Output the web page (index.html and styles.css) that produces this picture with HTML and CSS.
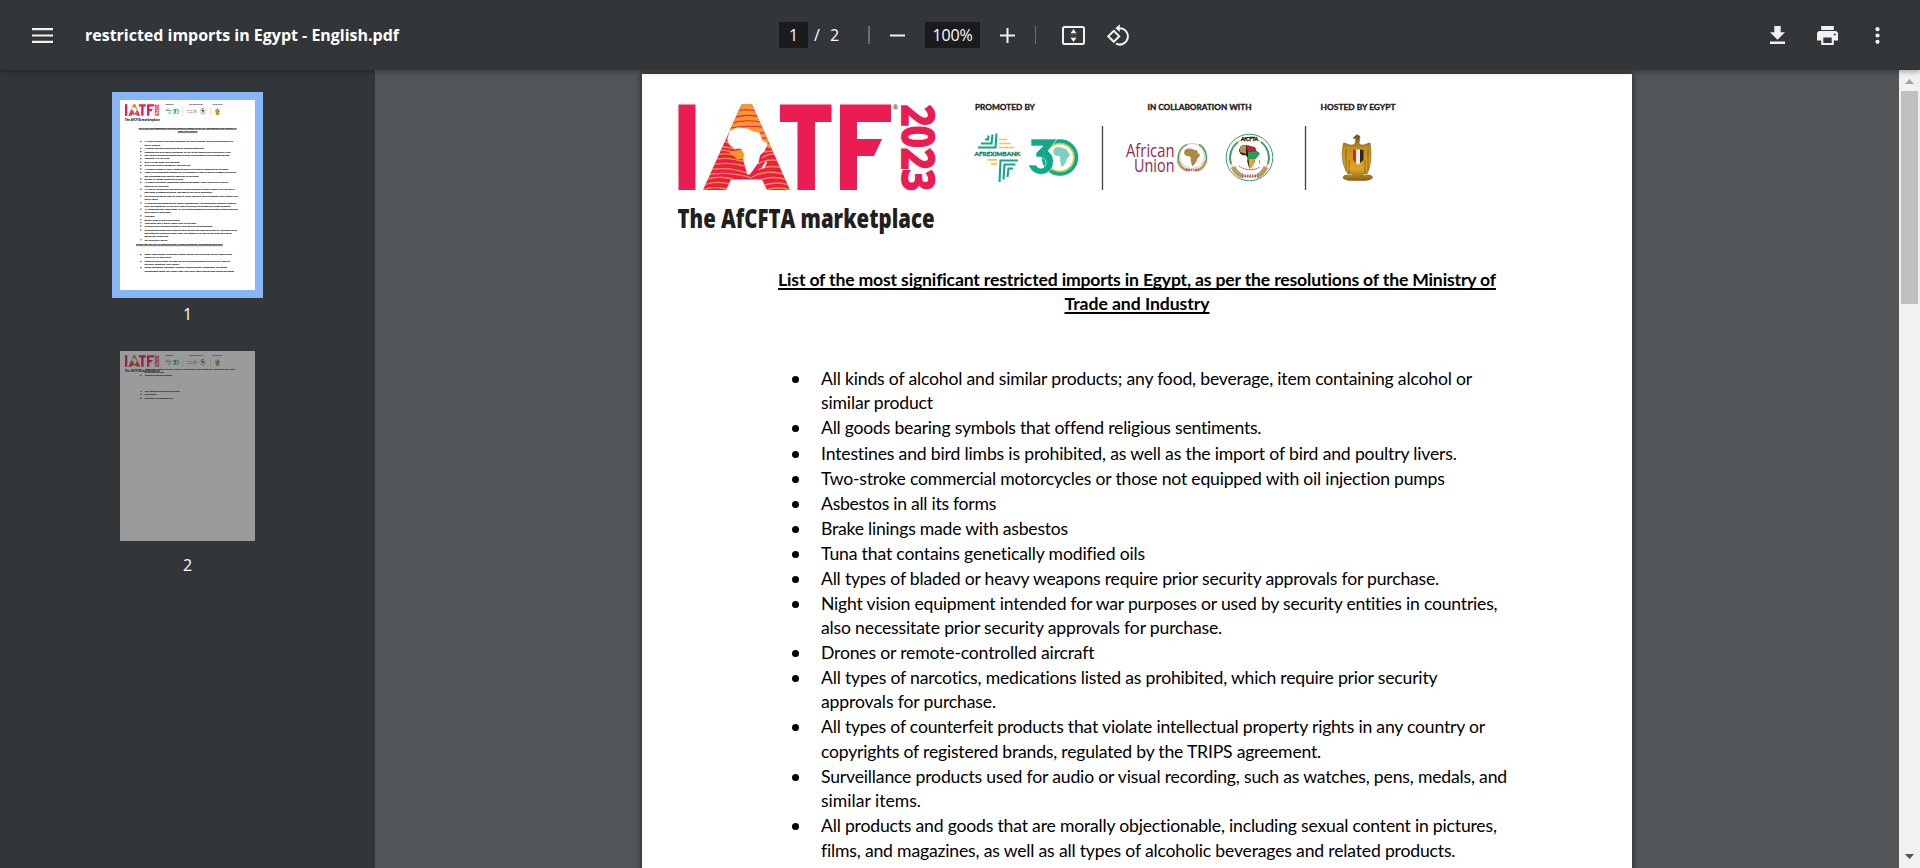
FILE: index.html
```html
<!DOCTYPE html>
<html lang="en">
<head>
<meta charset="utf-8">
<title>restricted imports in Egypt - English.pdf</title>
<link rel="stylesheet" href="styles.css">
</head>
<body>
<svg class="defs" width="0" height="0">
  <defs>
    <path id="africa" d="M6 8L24 0L48 2L62 9L78 12L86 32L98 38L92 54L79 68L76 84L66 98L56 112L50 114L44 94L40 78L42 64L34 50L18 50L6 42L0 28Z"/>
    <clipPath id="aShape"><path d="M741.5 104.5H752L790 190H767L762 179.500H731L726 190H703Z"/></clipPath>
    <linearGradient id="gold" x1="0" x2="0" y1="0" y2="1"><stop offset="0" stop-color="#6b4d18"/><stop offset=".3" stop-color="#c58e1d"/><stop offset=".75" stop-color="#dba525"/><stop offset="1" stop-color="#8a6114"/></linearGradient>
    <symbol id="banner" viewBox="642 74 990 190">
      <g fill="#ea1c52">
        <path d="M678.500 104.500H695.500V190H678.500Z"/>
        <path d="M741.500 104.500H752L790 190H767L762 179.500H731L726 190H703Z"/>
        <path d="M780 104.500H831.500V122H815V190H797.500V122H780Z"/>
        <path d="M840 104.500H891V122H857V139H882L874 156H857V190H840Z"/>
      </g>
      <g clip-path="url(#aShape)">
        <path d="M735 104H760L782 152L760 145L750 134L728 134Z" fill="#f8982a"/>
        <g fill="none" stroke="#ea1c52" stroke-width="1.100">
          <path d="M730 113Q744 107 760 112M730 119Q744 113 762 117M728 124Q746 118 766 123M725 129Q746 124 770 128M754 134L775 131M758 139L778 136M762 144L780 142"/>
        </g>
        <g fill="none" stroke="#f8982a" stroke-width="1.300">
          <path d="M716 140L736 144M714 145L736 149M712 150Q724 149 742 154M710 156Q726 151 746 158M708 161Q726 155 748 163M706 166Q726 160 752 168M704 171Q726 165 750 174M702 176Q726 170 752 178M702 181Q718 174 736 180M702 186Q714 180 730 184M702 190Q712 186 726 189M762 152L784 150M762 158Q772 150 786 158M758 164Q770 156 788 164M758 170Q770 163 790 170M752 177Q768 168 790 176M758 181Q772 174 790 181M762 186Q776 180 792 186M765 190Q778 186 792 190"/>
        </g>
        <path d="M729 152L744 149V159H737Z" fill="#f8982a"/>
      </g>
      <use href="#africa" transform="translate(727.500 128) scale(.405 .407)" fill="#fff" stroke="#fff" stroke-width="2" stroke-linejoin="round"/>
      <path d="M766 161L762 167L763.500 169L767 163Z" fill="#fff"/>
      <text class="reg" x="893" y="110">®</text>
      <text class="year" transform="translate(902 104.500) rotate(90)" textLength="86.500" lengthAdjust="spacingAndGlyphs">2023</text>
      <text class="tag" x="677.500" y="228" textLength="257" lengthAdjust="spacingAndGlyphs">The AfCFTA marketplace</text>

      <g class="cap">
        <text x="975" y="110" textLength="60" lengthAdjust="spacingAndGlyphs">PROMOTED BY</text>
        <text x="1147.500" y="110" textLength="104" lengthAdjust="spacingAndGlyphs">IN COLLABORATION WITH</text>
        <text x="1320.500" y="110" textLength="75" lengthAdjust="spacingAndGlyphs">HOSTED BY EGYPT</text>
      </g>
      <path d="M1102.500 126V190M1305.500 126V190" stroke="#444" stroke-width="1.300"/>

      <g fill="none" stroke="#12a88b" stroke-width="2.100">
        <path d="M978 147.500H995.500L996.500 133.500M981 143.500H991.500L992.500 134.500M985 139.500H988L988.500 135.500"/>
        <path d="M1018 160.500H1000.500L999.500 182M1015.500 164.500H1004.500L1003.500 179.500M1013 168.500H1008.500L1007.500 177"/>
      </g>
      <path d="M999 139.500H1007M999 143.500H1010.500M999 147.500H1014M987.500 159.800H997M991 163.800H997" stroke="#f4c63d" stroke-width="1.700"/>
      <text class="afrexim" x="974.500" y="155.900" textLength="46" lengthAdjust="spacingAndGlyphs">AFREXIMBANK</text>

      <circle cx="1060" cy="157.500" r="16" fill="#fff" stroke="#12a88b" stroke-width="4.500"/>
      <circle cx="1060" cy="157.500" r="13.800" fill="none" stroke="#e9cf3f" stroke-width="2" stroke-dasharray="2 .6"/>
      <use href="#africa" transform="translate(1053 147) scale(.175)" fill="#7fd0bf"/>
      <path d="M1031 139H1057L1048 151Q1055 156 1053 165C1050 177 1033 178 1028.500 165H1036C1039 171 1047 168 1046 162C1045 157 1040 157 1036 157V153L1043 146H1031Z" fill="#12a88b" stroke="#fff" stroke-width=".6"/>

      <g class="au">
        <text x="1126" y="156.500" textLength="48.500" lengthAdjust="spacingAndGlyphs">African</text>
        <text x="1134" y="172" textLength="40.500" lengthAdjust="spacingAndGlyphs">Union</text>
      </g>
      <g fill="none">
        <path d="M1181 167A15 15 0 0 1 1187 144.500M1203 167A15 15 0 0 0 1199 144.500" stroke="#3d9a66" stroke-width="1.500"/>
        <circle cx="1192" cy="156" r="12.500" stroke="#c5b98f" stroke-width=".8"/>
        <path d="M1178 161Q1182 171 1190 170M1206 161Q1202 171 1195 170" stroke="#b99b63" stroke-width="3"/>
        <path d="M1186 170H1199" stroke="#b25a6b" stroke-width="2" stroke-dasharray="1 .7"/>
      </g>
      <use href="#africa" transform="translate(1184 148.500) scale(.165 .155)" fill="#ac8842"/>

      <g fill="none">
        <circle cx="1249.500" cy="157.500" r="23.300" stroke="#3d9a66" stroke-width="1"/>
        <circle cx="1249.500" cy="157.500" r="19.500" stroke="#b9a88a" stroke-width=".8"/>
        <path d="M1231 164A20 20 0 0 1 1238 142M1268 164A20 20 0 0 0 1261 142" stroke="#3d9a66" stroke-width="1.800"/>
        <path d="M1233 167Q1237 175 1243 176M1266 167Q1262 175 1257 176" stroke="#b99b63" stroke-width="5"/>
        <path d="M1242 176H1258" stroke="#b25a6b" stroke-width="3" stroke-dasharray="1.500 1"/>
        <path d="M1239 166Q1249 173 1260 167" stroke="#a13b65" stroke-width="1" stroke-dasharray="1.500 .5"/>
      </g>
      <text class="afcfta" x="1241" y="141" textLength="17" lengthAdjust="spacingAndGlyphs">AfCFTA</text>
      <use href="#africa" transform="translate(1239 145) scale(.205)" fill="#222"/>
      <path d="M1240 146L1246 145V154L1240 152Z" fill="#b59259"/>
      <path d="M1246 145.500L1255 147L1256 151L1248 152Z" fill="#b5283c"/>
      <path d="M1248 152L1257 151L1260 154L1255 159H1248Z" fill="#2b9a54"/>
      <path d="M1248.500 159H1255L1254 164L1251 168.500H1249.500Z" fill="#f2a02d"/>
      <path d="M1259 161L1260.500 159.500L1259 165Z" fill="#2b9a54"/>

      <path d="M1353 138L1357 134.500L1360 136.500L1359 144C1363 147 1367 143 1370 143C1372 155 1371 165 1367 174H1361L1364 175.500Q1373 174 1372.500 178Q1370 181 1358 180.500Q1345 181 1343 178Q1343 174 1351 175.500L1354 174H1348C1342 165 1341 155 1343.500 143C1347 143 1350 147 1355 144L1356 139Z" fill="url(#gold)" stroke="#81601f" stroke-width=".6"/>
      <path d="M1346 149V171M1368 149V171M1349 160V173M1365 160V173" stroke="#80591b" stroke-width=".8"/>
      <path d="M1353 150V160L1356 163V149.500Z" fill="#c82d34"/>
      <path d="M1356 149.500H1360V163L1358 165L1356 163Z" fill="#f2eee2"/>
      <path d="M1360 149.500L1363.500 150V160L1360 163Z" fill="#2c251d"/>
    </symbol>
  </defs>
</svg>

<header class="toolbar">
  <svg class="menu" viewBox="0 0 21 15"><path d="M0 1.200H21M0 7.500H21M0 13.800H21"/></svg>
  <div class="title fit" data-width="314">restricted imports in Egypt - English.pdf</div>
  <div class="controls">
    <span class="field page-no">1</span>
    <span class="slash">/</span>
    <span class="total">2</span>
    <i class="rule"></i>
    <svg class="sign minus" viewBox="0 0 15 15"><path d="M0 7.500H15"/></svg>
    <span class="field zoom">100%</span>
    <svg class="sign plus" viewBox="0 0 15 15"><path d="M0 7.500H15M7.500 0V15"/></svg>
    <i class="rule second"></i>
    <svg class="fit-icon" viewBox="0 0 23 19"><rect x="1" y="1" width="21" height="17" rx="1.500" fill="none" stroke="#f1f1f1" stroke-width="2"/><path d="M11.500 3L14.300 7H8.700ZM11.500 16L14.300 12H8.700Z" fill="#f1f1f1"/><path d="M8.500 7.800H14.500M8.500 11.200H14.500" stroke="#f1f1f1" stroke-width=".8" opacity=".5"/></svg>
    <svg class="rotate" viewBox="0 0 22 22"><path d="M1.300 12.300L6.800 6.800L12.300 12.300L6.800 17.800Z" fill="none" stroke="#f1f1f1" stroke-width="2"/><path d="M12 4.200A8.200 8.200 0 1 1 9 19.700" fill="none" stroke="#f1f1f1" stroke-width="2"/><path d="M12.800 .3V8.100L8.300 4.200Z" fill="#f1f1f1"/></svg>
  </div>
  <div class="actions">
    <svg width="15" height="18" viewBox="0 0 15 18"><path d="M4.300 0H10.700V6.300H15L7.500 13.800L0 6.300H4.300ZM0 15.600H15V18H0Z"/></svg>
    <svg width="21" height="19" viewBox="0 0 21 19"><path fill-rule="evenodd" d="M4.200 0H16.800V4H4.200ZM3 5H18Q21 5 21 8V14.600H16.800V19H4.200V14.600H0V8Q0 5 3 5ZM6.300 11.500V17H14.700V11.500ZM17.800 7.400A1 1 0 1 0 17.800 9.500A1 1 0 1 0 17.800 7.400Z"/></svg>
    <svg width="5" height="17" viewBox="0 0 5 17"><circle cx="2.500" cy="2.200" r="2.100"/><circle cx="2.500" cy="8.500" r="2.100"/><circle cx="2.500" cy="14.800" r="2.100"/></svg>
  </div>
</header>

<main class="viewer">
  <aside class="sidebar">
    <div class="thumb selected">
      <svg class="sheet" viewBox="642 74 990 1393">
        <use href="#banner" x="642" y="74" width="990" height="190"/>
        <g class="mini-head">
          <text x="778" y="286" textLength="718">List of the most significant restricted imports in Egypt, as per the resolutions of the Ministry of</text>
          <text x="1065" y="310" textLength="145">Trade and Industry</text>
          <text x="760" y="1139" textLength="636">Goods that can only be imported under certain conditions, including payment only</text>
          <path d="M778 289H1496M1065 313H1210M760 1142H1396" stroke="#000" stroke-width="4"/>
        </g>
        <g class="mini">
          <text x="821" y="385" textLength="651">All kinds of alcohol and similar products; any food, beverage, item containing alcohol or</text>
          <text x="821" y="409">similar product</text>
          <text x="821" y="434" textLength="440">All goods bearing symbols that offend religious sentiments.</text>
          <text x="821" y="459" textLength="636">Intestines and bird limbs is prohibited, as well as the import of bird and poultry livers.</text>
          <text x="821" y="485" textLength="624">Two-stroke commercial motorcycles or those not equipped with oil injection pumps</text>
          <text x="821" y="510">Asbestos in all its forms</text>
          <text x="821" y="535">Brake linings made with asbestos</text>
          <text x="821" y="560">Tuna that contains genetically modified oils</text>
          <text x="821" y="585" textLength="618">All types of bladed or heavy weapons require prior security approvals for purchase.</text>
          <text x="821" y="610" textLength="676">Night vision equipment intended for war purposes or used by security entities in countries,</text>
          <text x="821" y="635" textLength="401">also necessitate prior security approvals for purchase.</text>
          <text x="821" y="659">Drones or remote-controlled aircraft</text>
          <text x="821" y="685" textLength="617">All types of narcotics, medications listed as prohibited, which require prior security</text>
          <text x="821" y="709">approvals for purchase.</text>
          <text x="821" y="734" textLength="663">All types of counterfeit products that violate intellectual property rights in any country or</text>
          <text x="821" y="759" textLength="499">copyrights of registered brands, regulated by the TRIPS agreement.</text>
          <text x="821" y="784" textLength="686">Surveillance products used for audio or visual recording, such as watches, pens, medals, and</text>
          <text x="821" y="807">similar items.</text>
          <text x="821" y="834" textLength="675">All products and goods that are morally objectionable, including sexual content in pictures,</text>
          <text x="821" y="857" textLength="634">films, and magazines, as well as all types of alcoholic beverages and related products.</text>
          <text x="821" y="880" textLength="686">All hunting devices, ammunition, or surveillance equipment are prohibited without approval</text>
          <text x="821" y="906">from security authorities</text>
          <text x="821" y="929">Narcotics</text>
          <text x="821" y="958">Energy drugs or their equivalents</text>
          <text x="821" y="980">Used parts with a power higher than is allowable</text>
          <text x="821" y="1003" textLength="498">Children's toys resembling pistols or rifles that are solid projectiles</text>
          <text x="821" y="1032" textLength="680">Incandescent lamps with filament light sources and large sounding kit, operating on an</text>
          <text x="821" y="1054" textLength="640">alternating current power supply from 100 watts to 240 volts, falling under tariff codes</text>
          <text x="821" y="1076">85392100, 85392900</text>
          <text x="821" y="1105">Car cooling air fabrics</text>
          <text x="821" y="1213" textLength="645">Ready-made clothes, furnishings, textiles, carpets, floor coverings, and on-apparel parts,</text>
          <text x="821" y="1236">except for our baby parts</text>
          <text x="821" y="1265" textLength="630">Shoes and similar items like bags, as well as consumer goods such as jewelry, scarves,</text>
          <text x="821" y="1287">ceramics, glassware, and utensils</text>
          <text x="821" y="1309" textLength="610">Sports equipment, cosmetics, weapons, pets and strips, newspapers, art objects,</text>
          <text x="821" y="1338" textLength="655">archaeological pieces, fish, military caps, yard works, fabric-type bundles, pencils and straps</text>
        </g>
        <path class="dots" d="M795 379h0M795 428h0M795 453h0M795 479h0M795 504h0M795 529h0M795 554h0M795 579h0M795 604h0M795 653h0M795 679h0M795 728h0M795 778h0M795 828h0M795 874h0M795 923h0M795 952h0M795 974h0M795 997h0M795 1026h0M795 1099h0M795 1207h0M795 1259h0M795 1303h0"/>
      </svg>
    </div>
    <div class="num">1</div>
    <div class="thumb second-thumb">
      <svg class="sheet" viewBox="642 74 990 1393">
        <use href="#banner" x="642" y="74" width="990" height="190"/>
        <g class="mini">
          <text x="821" y="214" textLength="666">Appliances, electric and non-electric, components, metal supports, unfinishing, and metal</text>
          <text x="821" y="232">furniture products</text>
          <text x="821" y="257" textLength="203">Medical drugs and supplies</text>
          <text x="821" y="375" textLength="257">Non-alcoholic flavoured beverages</text>
          <text x="821" y="397">Chocolates</text>
          <text x="821" y="426" textLength="210">Cosmetics and essential oils</text>
        </g>
        <path class="dots" d="M795 208h0M795 251h0M795 369h0M795 391h0M795 420h0"/>
      </svg>
    </div>
    <div class="num">2</div>
  </aside>

  <section class="stage">
    <article class="page">
      <svg class="banner"><use href="#banner"/></svg>
      <h1>
        <span class="fit" data-width="718">List of the most significant restricted imports in Egypt, as per the resolutions of the Ministry of</span><br>
        <span class="fit" data-width="145">Trade and Industry</span>
      </h1>
      <ul>
        <li><span class="fit" data-width="651">All kinds of alcohol and similar products; any food, beverage, item containing alcohol or</span><br><span class="fit" data-width="112">similar product</span></li>
        <li><span class="fit" data-width="440">All goods bearing symbols that offend religious sentiments.</span></li>
        <li><span class="fit" data-width="636">Intestines and bird limbs is prohibited, as well as the import of bird and poultry livers.</span></li>
        <li><span class="fit" data-width="624">Two-stroke commercial motorcycles or those not equipped with oil injection pumps</span></li>
        <li><span class="fit" data-width="175">Asbestos in all its forms</span></li>
        <li><span class="fit" data-width="247">Brake linings made with asbestos</span></li>
        <li><span class="fit" data-width="324">Tuna that contains genetically modified oils</span></li>
        <li><span class="fit" data-width="618">All types of bladed or heavy weapons require prior security approvals for purchase.</span></li>
        <li><span class="fit" data-width="677">Night vision equipment intended for war purposes or used by security entities in countries,</span><br><span class="fit" data-width="401">also necessitate prior security approvals for purchase.</span></li>
        <li><span class="fit" data-width="273">Drones or remote-controlled aircraft</span></li>
        <li><span class="fit" data-width="617">All types of narcotics, medications listed as prohibited, which require prior security</span><br><span class="fit" data-width="175">approvals for purchase.</span></li>
        <li><span class="fit" data-width="664">All types of counterfeit products that violate intellectual property rights in any country or</span><br><span class="fit" data-width="500">copyrights of registered brands, regulated by the TRIPS agreement.</span></li>
        <li><span class="fit" data-width="686">Surveillance products used for audio or visual recording, such as watches, pens, medals, and</span><br><span class="fit" data-width="100">similar items.</span></li>
        <li><span class="fit" data-width="676">All products and goods that are morally objectionable, including sexual content in pictures,</span><br><span class="fit" data-width="634">films, and magazines, as well as all types of alcoholic beverages and related products.</span></li>
      </ul>
    </article>
  </section>

  <div class="scrollbar">
    <svg class="arrow" viewBox="0 0 9 5"><path d="M4.500 0L9 5H0Z" fill="#a3a3a3"/></svg>
    <div class="handle"></div>
    <svg class="arrow down" viewBox="0 0 9 5"><path d="M4.500 5L9 0H0Z" fill="#505050"/></svg>
  </div>
</main>
<script src="fit.js"></script>
</body>
</html>
```
FILE: styles.css
```css
* { box-sizing: border-box; }
html, body { height: 100%; }
body {
  margin: 0;
  overflow: hidden;
  display: flex;
  flex-direction: column;
  background: #525659;
  font-family: "Open Sans", "Noto Sans", sans-serif;
}
.defs { position: absolute; }
svg { display: block; flex: none; }

.toolbar {
  position: relative;
  z-index: 2;
  flex: none;
  height: 70px;
  display: flex;
  align-items: center;
  padding: 0 40px 0 32px;
  background: #323639;
  color: #fff;
  box-shadow: 0 2px 5px rgba(0, 0, 0, .3);
}
.menu { width: 21px; height: 15px; stroke: #f1f1f1; stroke-width: 2.2; }
.title {
  width: 694px;
  margin-left: 32px;
  font-size: 16px;
  font-weight: 700;
  line-height: 24px;
  white-space: nowrap;
}
.controls { display: flex; align-items: center; font-size: 16px; line-height: 26px; }
.field { height: 26px; background: #191b1c; text-align: center; }
.page-no { width: 29px; }
.slash { width: 8px; margin-left: 6px; }
.total { width: 10px; margin-left: 8px; }
.rule { width: 2px; height: 18px; margin-left: 28px; background: #6c6f71; }
.rule.second { width: 1px; margin-left: 20px; }
.sign { width: 15px; height: 15px; stroke: #f1f1f1; stroke-width: 2; }
.minus { margin-left: 20px; }
.plus { margin-left: 20px; }
.zoom { width: 55px; margin-left: 20px; letter-spacing: -.2px; }
.fit-icon { width: 23px; height: 19px; margin-left: 26px; }
.rotate { width: 22px; height: 22px; margin-left: 22px; }
.actions { display: flex; align-items: center; margin-left: auto; fill: #f1f1f1; }
.actions svg + svg { margin-left: 32px; }
.actions svg:last-child { margin-left: 37px; }

.viewer { flex: 1; min-height: 0; display: flex; }
.sidebar {
  width: 375px;
  flex: none;
  display: flex;
  flex-direction: column;
  align-items: center;
  background: #323639;
  padding-top: 22px;
}
.thumb { flex: none; }
.selected { padding: 8px; margin-bottom: 3px; background: #8ab4f8; }
.sheet { width: 135px; height: 190px; background: #fff; }
.second-thumb { margin: 24px 0 11px; }
.second-thumb .sheet { opacity: .5; }
.num { color: #fff; font-size: 16px; line-height: 26px; }

.stage { flex: 1; min-width: 0; overflow: hidden; padding: 4px 0 0 267px; }
.page {
  width: 990px;
  height: 1400px;
  background: #fff;
  box-shadow: 0 0 6px 1px rgba(30, 30, 30, .75);
  color: #000;
  font-family: Lato, Carlito, sans-serif;
  font-size: 17.6px;
}
.banner { width: 990px; height: 190px; }
.page h1 {
  margin: 4px 0 0;
  text-align: center;
  font-size: 17.6px;
  font-weight: 700;
  line-height: 24.2px;
}
.page h1 .fit {
  display: inline-block;
  text-decoration: underline;
  text-decoration-thickness: 2px;
  text-underline-offset: 2px;
  text-decoration-skip-ink: none;
}
.page ul { margin: 50.7px 0 0; padding: 0 0 0 179px; list-style: none; line-height: 24.35px; }
.page li { position: relative; margin-bottom: .7px; white-space: nowrap; }
.page li::before {
  content: "";
  position: absolute;
  left: -29px;
  top: 9px;
  width: 7px;
  height: 7px;
  border-radius: 50%;
  background: #000;
}

.scrollbar {
  width: 21px;
  flex: none;
  display: flex;
  flex-direction: column;
  align-items: center;
  padding: 9px 0;
  background: #f1f1f1;
}
.arrow { width: 9px; height: 5px; }
.arrow.down { margin-top: auto; }
.handle { width: 17px; height: 213px; margin-top: 7px; background: #c1c1c1; }

.reg { font: 700 7px "Liberation Sans", sans-serif; fill: #333; }
.year { font: 700 44px "Open Sans", sans-serif; fill: #ea1c52; stroke: #ea1c52; stroke-width: 1.8; }
.tag { font: 800 26px "Open Sans", sans-serif; fill: #231f20; }
.cap { font: 700 8px Lato, sans-serif; fill: #1c1c1c; stroke: #1c1c1c; stroke-width: .35; }
.afrexim { font: 700 6px Lato, sans-serif; fill: #147a68; stroke: #147a68; stroke-width: .3; }
.au { font: 400 18px "Open Sans", sans-serif; fill: #93294f; }
.afcfta { font: 700 5.5px Lato, sans-serif; fill: #111; stroke: #111; stroke-width: .3; }
.mini { font: 400 18px Lato, sans-serif; fill: #000; stroke: #000; stroke-width: .5; }
.mini-head { font: 700 18px Lato, sans-serif; fill: #000; stroke: #000; stroke-width: .6; }
.dots { stroke: #000; stroke-width: 9; stroke-linecap: round; }
```
FILE: fit.js
```js
// Spread each line's letters so that it fills its data-width.
document.querySelectorAll('.fit').forEach(function (line) {
  var range = document.createRange();
  range.selectNodeContents(line);
  var natural = range.getBoundingClientRect().width;
  var spacing = (Number(line.dataset.width) - natural) / line.textContent.length;
  line.style.letterSpacing = spacing.toFixed(4) + 'px';
});
```
